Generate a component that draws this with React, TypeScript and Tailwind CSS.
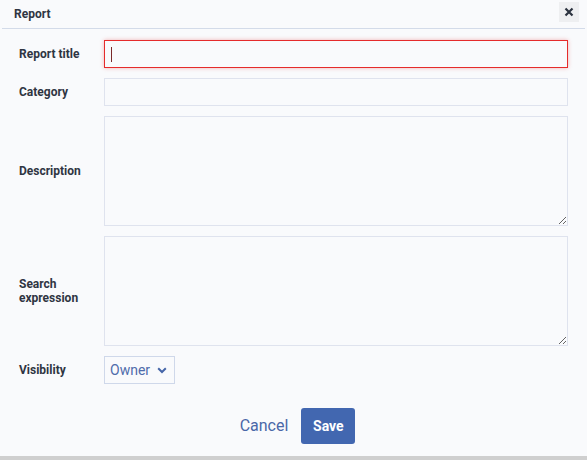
import React from 'react';

const font = { fontFamily: 'Roboto, "Liberation Sans", sans-serif' };

function Label({ children }: { children: React.ReactNode }) {
  return (
    <label className="w-[85px] shrink-0 pr-2 text-[12px] font-bold leading-[14px] text-[#2f3542]">
      {children}
    </label>
  );
}

export default function App() {
  return (
    <div className="w-[587px] h-[460px] bg-[#cfcfcf]" style={font}>
      <div className="h-[456px] bg-[#f9fafc] flex flex-col">
        <div className="h-[29px] flex items-center justify-between pl-[14px] pr-[6px] border-b border-[#d3dbe9] mx-[2px]">
          <span className="text-[12px] font-bold text-[#2f3542] -ml-[2px]">Report</span>
          <button className="h-[20px] w-[20px] bg-[#eeeff1] flex items-center justify-center -mt-[4px]">
            <svg width="10" height="10" viewBox="0 0 10 10">
              <path d="M1.5 1.5 L8.5 8.5 M8.5 1.5 L1.5 8.5" stroke="#2c3340" strokeWidth="2.2" />
            </svg>
          </button>
        </div>

        <div className="flex flex-col gap-[10px] pt-[11px] pl-[19px] pr-[19px]">
          <div className="flex items-center">
            <Label>Report title</Label>
            <div className="relative flex-1">
              <input className="block w-full h-[28px] bg-[#f9fafc] border border-[#e52b2b] shadow-[0_0_4px_rgba(229,43,43,0.35)] outline-none px-2" />
              <span className="absolute left-[7px] top-[7px] h-[15px] w-px bg-[#7a2a2a]" />
            </div>
          </div>
          <div className="flex items-center">
            <Label>Category</Label>
            <input className="flex-1 h-[28px] bg-[#f9fafc] border border-[#dfe3ee] outline-none px-2" />
          </div>
          <div className="flex items-center">
            <Label>Description</Label>
            <textarea className="flex-1 h-[110px] bg-[#f9fafc] border border-[#dfe3ee] outline-none px-2 block" />
          </div>
          <div className="flex items-center">
            <Label>
              Search
              <br />
              expression
            </Label>
            <textarea className="flex-1 h-[110px] bg-[#f9fafc] border border-[#dfe3ee] outline-none px-2 block" />
          </div>
          <div className="flex items-center">
            <Label>Visibility</Label>
            <div className="h-[28px] w-[71px] border border-[#cfd8ea] flex items-center justify-between pl-[5px] pr-[7px] text-[14px] text-[#4f6cab]">
              <span>Owner</span>
              <svg width="10" height="7" viewBox="0 0 10 7">
                <path d="M1.2 1.3 L5 5 L8.8 1.3" stroke="#4565a8" strokeWidth="2" fill="none" />
              </svg>
            </div>
          </div>
        </div>

        <div className="flex justify-center items-center gap-[5px] mt-[24px]">
          <button className="px-2 h-[36px] text-[16px] text-[#4a67a8]">Cancel</button>
          <button className="h-[36px] w-[54px] rounded-[3px] bg-[#4267b0] text-white text-[14px] font-bold">Save</button>
        </div>
      </div>
    </div>
  );
}
